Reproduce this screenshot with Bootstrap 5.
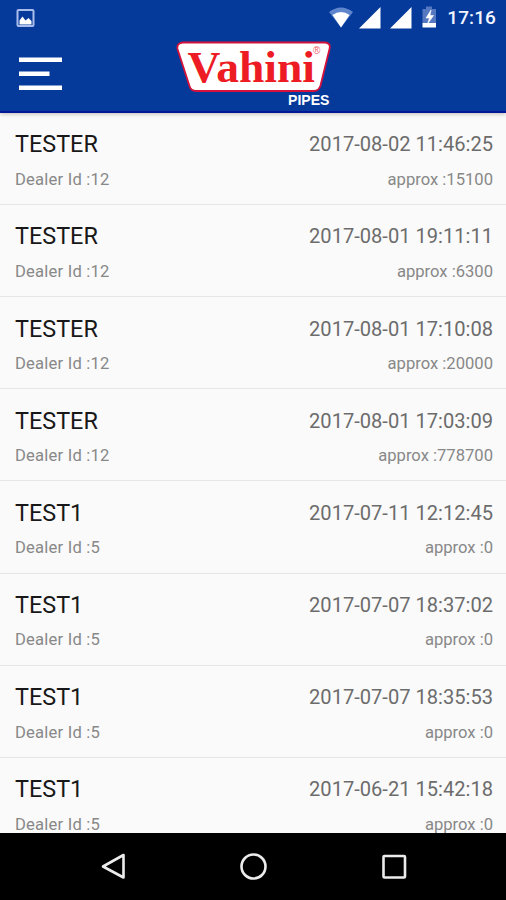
<!DOCTYPE html>
<html lang="en">
<head>
<meta charset="utf-8">
<meta name="viewport" content="width=device-width, initial-scale=1">
<title>Vahini Pipes</title>
<link href="https://cdn.jsdelivr.net/npm/bootstrap@5.3.0/dist/css/bootstrap.min.css" rel="stylesheet">
<style>
body{font-family:Roboto,"Liberation Sans",sans-serif;background:#fafafa}
.app-screen{height:900px}
.app-header{height:113px;background:#053a9b;border-bottom:2px solid #03169a;box-shadow:0 1px 4px rgba(60,40,20,.3);z-index:1}
.status-bar{height:36px;padding:0 10px 0 16px}
.clock{font-size:19px;font-weight:500;line-height:36px;letter-spacing:.1px;color:#f1f5ff}
.toolbar{height:75px}
.orders{min-height:0}
.order{height:92.14px;padding:17.4px 13px 0 15px;border-bottom:1.5px solid #e4e6e7}
.order:first-child{height:92px}
.order-name{font-size:23.4px;line-height:28px;color:#181818}
.order-date{font-size:20.1px;line-height:28px;color:#6c6c6c}
.order-meta{font-size:16.6px;line-height:22px;margin-top:10.5px;color:#888}
.dealer{letter-spacing:.2px}
.nav-keys{height:67px;background:#000}
svg{display:block}
</style>
</head>
<body>
<div class="app-screen d-flex flex-column overflow-hidden">
  <header class="app-header flex-shrink-0 position-relative">
    <div class="status-bar d-flex align-items-center justify-content-between">
      <svg width="19" height="19" viewBox="0 0 19 19"><rect x="1.5" y="1" width="16" height="16" rx="1" fill="none" stroke="#a9bdec" stroke-width="2"/><path d="M3.5 15.5v-4l3-4 3 4 3-2.5 3 3v3.5z" fill="#fff"/></svg>
      <div class="d-flex align-items-center">
        <svg width="118" height="36" viewBox="0 0 118 36">
          <path d="M0 12Q12 3 24 12L12 27.5z" fill="#5f86cc"/>
          <path d="M3.5 15Q12 9 20.5 15L12 27.5z" fill="#fff"/>
          <path d="M30 28.5L51.5 7v21.500zM61 28.500L82.500 7v21.500z" fill="#fff"/>
          <path d="M93.500 9h3.500V6.500h6V9h4v14h-13.500z" fill="#5578c0"/><path d="M93.500 23h13.500v4.500h-13.500z" fill="#fff"/><path d="M102 10l-5 8h3.500l-2 6 6-8.500h-3.500z" fill="#fff" stroke="#fff" stroke-width=".6"/>
        </svg>
        <span class="clock">17:16</span>
      </div>
    </div>
    <div class="toolbar">
      <svg width="506" height="75" viewBox="0 36 506 75">
        <path d="M19 59.800h43M19 73.800h30.500M19 87.800h43" stroke="#fff" stroke-width="4.600"/>
        <path d="M183 42.500H325Q331 43 329.500 49L320.500 85.500Q319 91 313.500 91H196Q191 91 189.500 86L177.500 49Q176.500 43 183 42.500z" fill="#fff" stroke="#d5123c" stroke-width="1.800"/>
        <text x="187.500" y="82.300" textLength="127.500" lengthAdjust="spacingAndGlyphs" font-family="Liberation Serif,serif" font-weight="700" font-size="45" fill="#ed1c24">Vahini</text>
        <text x="313" y="54" font-family="Liberation Sans,sans-serif" font-size="10" fill="#f0606a">®</text>
        <text x="288" y="105" textLength="41.500" lengthAdjust="spacingAndGlyphs" font-family="Liberation Sans,sans-serif" font-weight="700" font-size="14" fill="#fff">PIPES</text>
      </svg>
    </div>
  </header>
  <main class="orders flex-grow-1 overflow-hidden" id="orders"></main>
  <nav class="nav-keys flex-shrink-0">
    <svg width="506" height="67" viewBox="0 833 506 67" fill="none" stroke="#ececec" stroke-width="2.600">
      <path d="M123.500 855v22.500L103 866.500z" stroke-linejoin="round"/>
      <circle cx="253.500" cy="866.500" r="12"/>
      <rect x="383.500" y="856" width="21.500" height="21.500" rx="1"/>
    </svg>
  </nav>
</div>
<script>
const orders = [
  ["TESTER", 12, "2017-08-02 11:46:25", 15100],
  ["TESTER", 12, "2017-08-01 19:11:11", 6300],
  ["TESTER", 12, "2017-08-01 17:10:08", 20000],
  ["TESTER", 12, "2017-08-01 17:03:09", 778700],
  ["TEST1", 5, "2017-07-11 12:12:45", 0],
  ["TEST1", 5, "2017-07-07 18:37:02", 0],
  ["TEST1", 5, "2017-07-07 18:35:53", 0],
  ["TEST1", 5, "2017-06-21 15:42:18", 0]
];
document.getElementById("orders").innerHTML = orders.map(([name, dealer, date, total]) => `
  <div class="order">
    <div class="d-flex justify-content-between"><span class="order-name">${name}</span><span class="order-date">${date}</span></div>
    <div class="order-meta d-flex justify-content-between"><span class="dealer">Dealer Id :${dealer}</span><span>approx :${total}</span></div>
  </div>`).join("");
</script>
<script src="https://cdn.jsdelivr.net/npm/bootstrap@5.3.0/dist/js/bootstrap.bundle.min.js"></script>
</body>
</html>
